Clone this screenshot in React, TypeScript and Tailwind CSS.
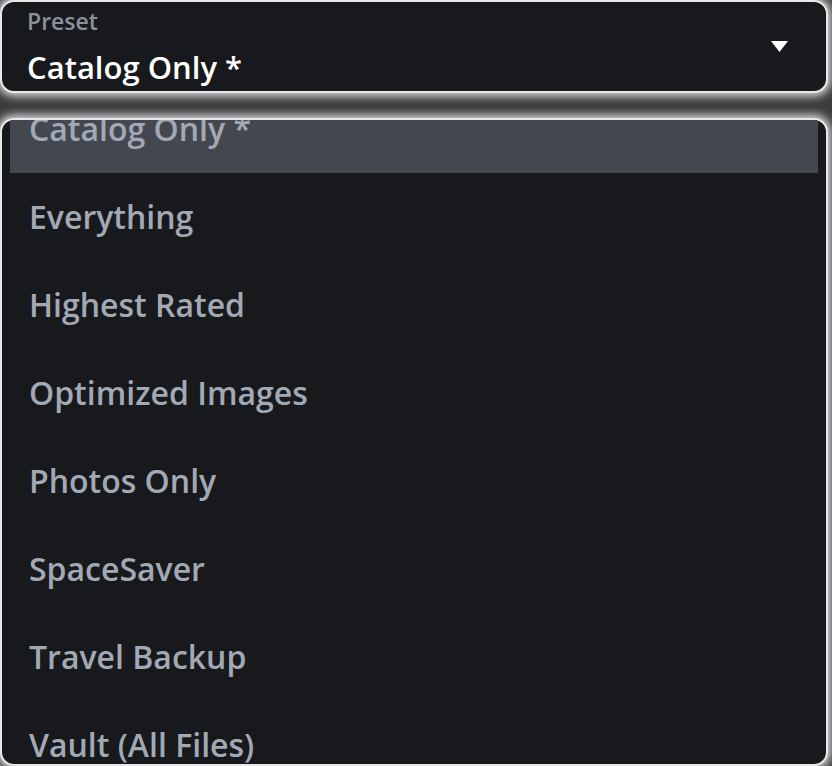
import React from 'react';

const presets = [
  'Catalog Only *',
  'Everything',
  'Highest Rated',
  'Optimized Images',
  'Photos Only',
  'SpaceSaver',
  'Travel Backup',
  'Vault (All Files)',
];

const font = { fontFamily: '"Open Sans", "Noto Sans", sans-serif' };

export default function App() {
  const selected = presets[0];
  return (
    <div className="h-[766px] w-[832px] overflow-hidden bg-[#3b3c3e] flex flex-col gap-[25px]" style={font}>
      <div className="relative h-[93px] w-[828px] shrink-0 rounded-[14px] border-2 border-[#e8e8e8] bg-[#18191d] px-[25px] pt-[4px] shadow-[0_0_10px_3px_rgba(255,255,255,0.85)]">
        <div className="text-[23px] font-semibold leading-[30px] text-[#8b919b]">Preset</div>
        <div className="mt-[11px] text-[31px] font-semibold leading-[40px] text-white">{selected}</div>
        <svg className="absolute right-[38px] top-[39px]" width="17" height="12" viewBox="0 0 17 12">
          <path d="M0 0 H17 L8.5 11 Z" fill="#ffffff" />
        </svg>
      </div>
      <div className="relative flex-1 w-[828px] overflow-hidden rounded-[14px] border-2 border-[#e8e8e8] bg-[#18191d] shadow-[0_0_10px_3px_rgba(255,255,255,0.85)]">
        <div className="mt-[-35px] flex flex-col">
          {presets.map((p) => (
            <div
              key={p}
              className={
                'mx-2 flex h-[88px] items-center px-[19px] text-[32px] font-semibold text-[#a3a9b4] ' +
                (p === selected ? 'bg-[#434850]' : '')
              }
            >
              {p}
            </div>
          ))}
        </div>
      </div>
    </div>
  );
}
